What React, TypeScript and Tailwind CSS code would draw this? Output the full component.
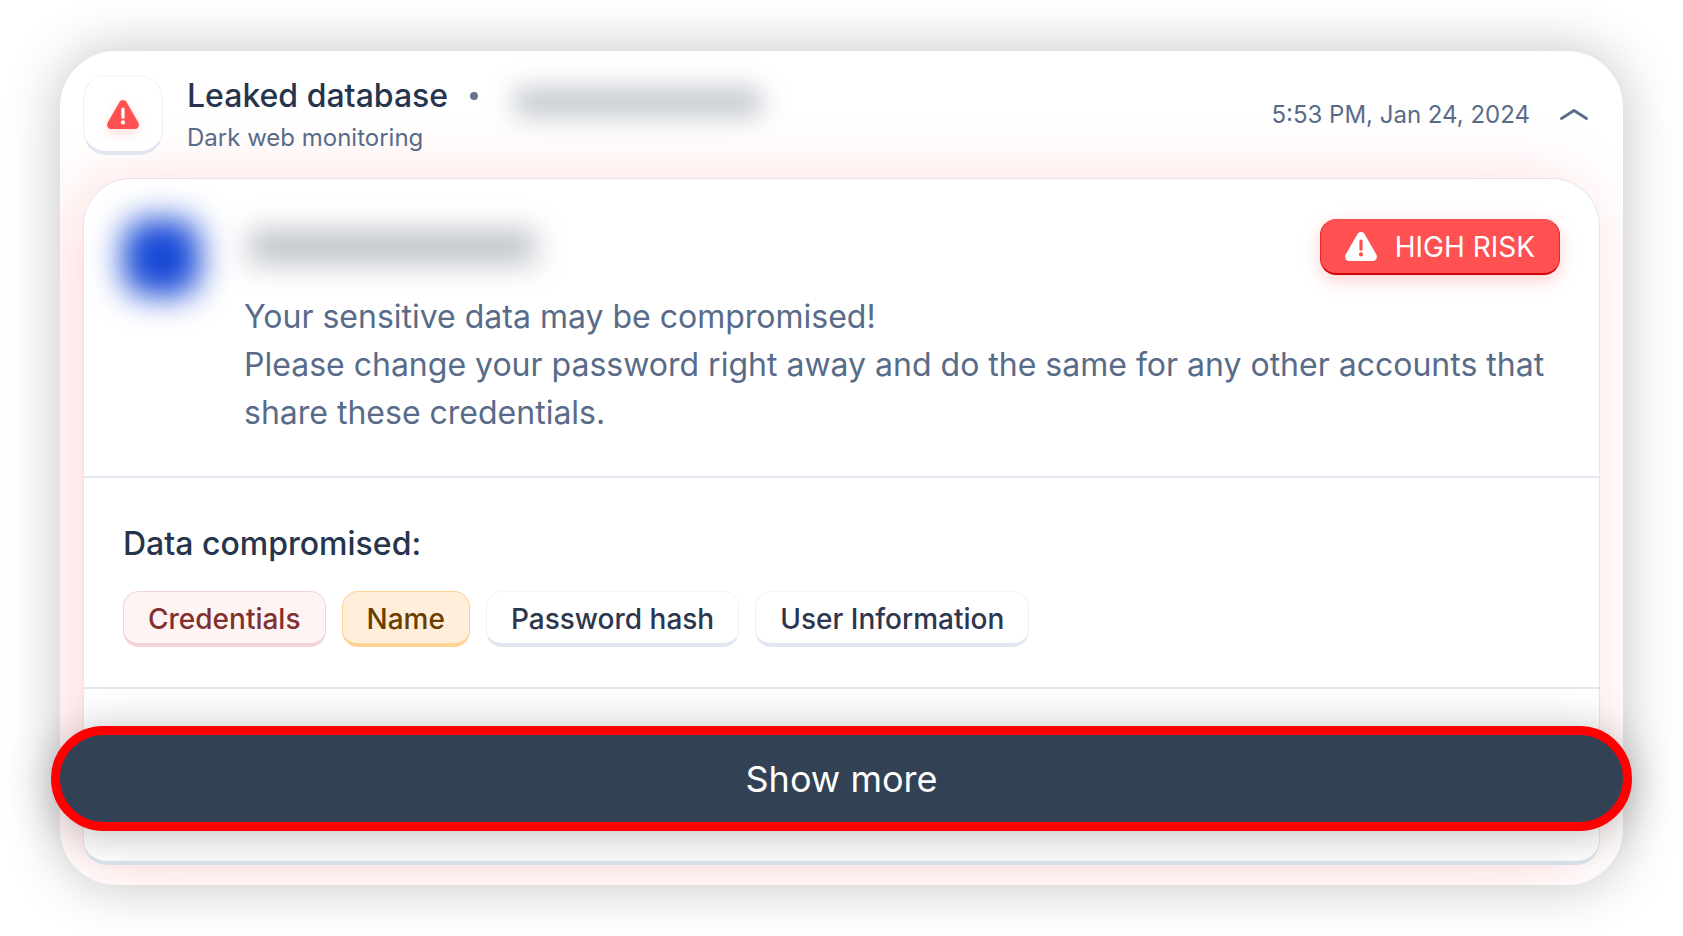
import { useState } from 'react'
import { clsx } from 'clsx'

const chips = [
  { label: 'Credentials', tone: 'danger' },
  { label: 'Name', tone: 'warning' },
  { label: 'Password hash', tone: 'neutral' },
  { label: 'User Information', tone: 'neutral' },
]

function AlertIcon({ mark, className }: { mark: string; className?: string }) {
  return (
    <svg viewBox="0 0 32 29" className={className} aria-hidden="true">
      <path
        d="M12.2 2.4C14-.8 18-.8 19.8 2.4L31.3 22.6C33 25.7 31 29 27.6 29H4.4C1 29-1 25.7.7 22.6Z"
        fill="currentColor"
      />
      <path d="M16 9.2V17.2" stroke={mark} strokeWidth="3.2" strokeLinecap="round" />
      <circle cx="16" cy="22.4" r="2.1" fill={mark} />
    </svg>
  )
}

function Chip({ label, tone }: { label: string; tone: string }) {
  return (
    <li
      className={clsx(
        'flex h-14 items-center rounded-2xl border border-b-4 px-6 pt-0.5 text-[28px] font-medium leading-8',
        tone === 'danger' && 'border-[#f3d4d4] bg-[#fff4f4] text-[#813030]',
        tone === 'warning' && 'border-[#ffd394] bg-[#ffeeda] text-[#6b3e00]',
        tone === 'neutral' && 'border-x-[#eef2f8] border-t-[#f4f6fa] border-b-[#e0e7f1] bg-white text-[#2d364d]'
      )}
    >
      {label}
    </li>
  )
}

export default function App() {
  const [open, setOpen] = useState(true)

  return (
    <main className="min-h-screen bg-white px-[60px] py-[51px] font-[Inter,sans-serif]">
      <article className="relative rounded-[56px] bg-white px-[23px] pt-6 pb-5 shadow-[0_0_56px_rgba(0,0,0,0.24)]">
        {/* red glow around the panel, clipped to the card */}
        <div className="absolute inset-0 overflow-hidden rounded-[56px]">
          <div className="absolute inset-x-[23px] top-[127px] bottom-5 rounded-[48px] shadow-[-12px_4px_70px_rgba(255,70,70,0.2)]" />
        </div>

        <header className="relative flex h-20 items-center">
          <div className="flex size-20 shrink-0 items-center justify-center rounded-3xl border border-b-4 border-x-[#edf1f7] border-t-[#f3f5f9] border-b-[#e0e6f0] bg-white pt-0.5">
            <AlertIcon mark="#ffffff" className="w-8 text-[#ff5052] drop-shadow-[0_4px_6px_rgba(255,80,80,0.2)]" />
          </div>
          <div className="ml-6 flex-1 pt-0.5">
            <div className="flex items-center">
              <h1 className="text-[32px] font-medium leading-10 text-[#26354d]">Leaked database</h1>
              <span className="ml-[22px] size-2 rounded-full bg-[#64748f]" />
              <span className="mt-3 ml-9 h-7 w-[248px] rounded-lg bg-[#334155]/30 blur-[13px]" />
            </div>
            <p className="mt-1 text-2xl leading-9 text-[#586b88]">Dark web monitoring</p>
          </div>
          <time className="text-2xl leading-8 text-[#586b88]" dateTime="2024-01-24T17:53">
            5:53 PM, Jan 24, 2024
          </time>
          <button
            type="button"
            aria-label="Toggle details"
            aria-expanded={open}
            onClick={() => setOpen(!open)}
            className="mr-3 ml-[30px] text-[#586b88]"
          >
            <svg viewBox="0 0 28 12" className="h-3 w-7" fill="none" aria-hidden="true">
              <path
                d="M1.5 9.5L14 1.5L26.5 9.5"
                stroke="currentColor"
                strokeWidth="2.8"
                strokeLinecap="round"
                strokeLinejoin="round"
              />
            </svg>
          </button>
        </header>

        {open && (
          <div className="relative mt-[23px] rounded-t-[48px] rounded-b-3xl border border-b-4 border-x-[#e3e6f0] border-t-[#eadfe6] border-b-[#dbe3ed] bg-white">
            <section className="flex gap-11 border-b-2 border-[#e1e8f1] px-[39px] pt-10 pb-[39px]">
              <div className="size-[77px] shrink-0 rounded-3xl bg-[#1648d6] blur-[16px]" />
              <div className="min-w-0 flex-1">
                <div className="flex h-14 items-center justify-between">
                  <span className="ml-1 h-8 w-[288px] rounded-lg bg-[#334155]/35 blur-[15px]" />
                  <span className="flex h-14 items-center gap-[18px] rounded-2xl border border-b-2 border-x-[#e82a2e] border-t-[#ff5052] border-b-[#d50408] bg-[#ff5052] px-6 text-[28px] leading-8 text-white shadow-[0_6px_18px_rgba(255,80,80,0.25)]">
                    <AlertIcon mark="#ff5052" className="w-8" />
                    HIGH RISK
                  </span>
                </div>
                <p className="mt-[18px] text-[32px] leading-12 text-[#586b88]">
                  Your sensitive data may be compromised!
                  <br />
                  Please change your password right away and do the same for any other accounts that share these
                  credentials.
                </p>
              </div>
            </section>

            <section className="border-b-2 border-[#e1e8f1] px-[39px] pt-10 pb-10">
              <h2 className="mt-0.5 text-[32px] font-medium leading-12 text-[#26354d]">Data compromised:</h2>
              <ul className="mt-[23px] flex flex-wrap gap-4">
                {chips.map((chip) => (
                  <Chip key={chip.label} {...chip} />
                ))}
              </ul>
            </section>

            <div className="-mx-[33px] pt-[37px] pb-[30px]">
              <button
                type="button"
                className="h-[105px] w-full rounded-full border-9 border-[#ff0000] bg-[#334155] text-4xl text-white shadow-[0_4px_44px_rgba(0,0,0,0.26)]"
              >
                Show more
              </button>
            </div>
          </div>
        )}
      </article>
    </main>
  )
}
